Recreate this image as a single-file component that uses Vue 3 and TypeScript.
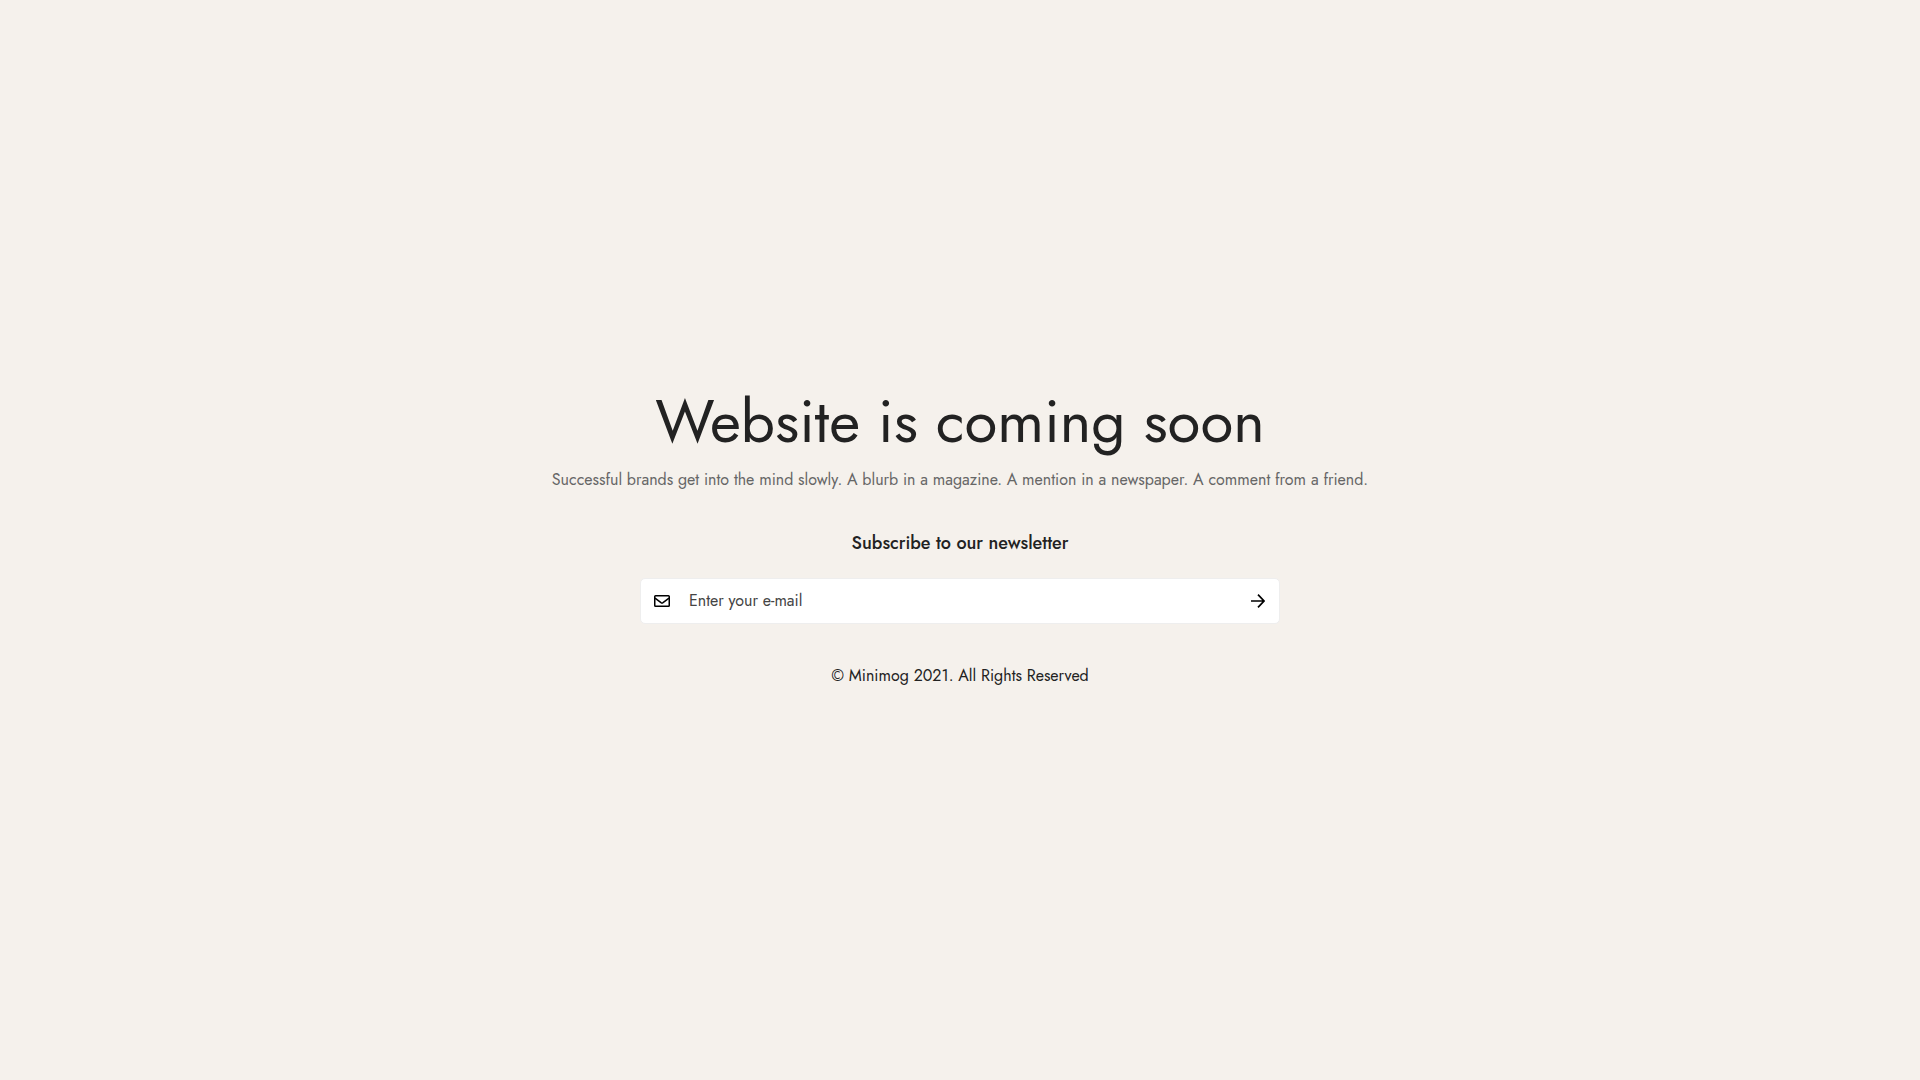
<script setup lang="ts">
import { ref } from 'vue'

const email = ref('')
</script>

<template>
  <main class="page">
    <h1 class="title">Website is coming soon</h1>
    <p class="intro">
      Successful brands get into the mind slowly. A blurb in a magazine. A mention in a newspaper. A comment from a friend.
    </p>
    <h2 class="subtitle"><label for="email">Subscribe to our newsletter</label></h2>
    <form class="form" @submit.prevent>
      <svg class="mail" viewBox="0 0 16 12" aria-hidden="true">
        <rect x="0.75" y="0.75" width="14.5" height="10.5" rx="0.8" />
        <path d="M1 3.2 L7 7.7 Q8 8.4 9 7.7 L15 3.2" />
      </svg>
      <input id="email" v-model="email" class="field" type="email" placeholder="Enter your e-mail" />
      <button class="send" type="submit" aria-label="Subscribe">
        <svg class="arrow" viewBox="0 0 14 14" aria-hidden="true">
          <path d="M0 7 H13 M7 0.7 L13 7 L7 13.3" />
        </svg>
      </button>
    </form>
    <p class="copyright">© Minimog 2021. All Rights Reserved</p>
  </main>
</template>

<style>
body {
  margin: 0;
  background: #f5f1ec;
}
</style>

<style scoped>
.page {
  box-sizing: border-box;
  min-height: 100vh;
  padding: 0 16px 6px;
  display: flex;
  flex-direction: column;
  align-items: center;
  justify-content: center;
  background: #f5f1ec;
  color: #222;
  font-family: Jost, Lato, sans-serif;
  font-size: 16px;
  line-height: 24px;
  text-align: center;
}

.title {
  margin: 0 0 10px;
  font-size: 60px;
  font-weight: 400;
  line-height: 72px;
}

.intro {
  margin: 0 0 36px;
  color: #666;
}

.subtitle {
  margin: 0 0 20px;
  font-size: 18px;
  font-weight: 500;
  line-height: 30px;
}

.form {
  box-sizing: border-box;
  width: 100%;
  max-width: 640px;
  height: 46px;
  margin: 0 0 40px;
  display: flex;
  align-items: center;
  border: 1px solid #eee;
  border-radius: 5px;
  background: #fff;
}

.mail {
  flex: none;
  width: 16px;
  height: 12px;
  margin-left: 13px;
  fill: none;
  stroke: #000;
  stroke-width: 1.5;
}

.field {
  box-sizing: border-box;
  flex: 1;
  min-width: 0;
  height: 44px;
  padding: 0 19px 2px;
  border: 0;
  outline: 0;
  background: transparent;
  color: #222;
  font: inherit;
}

.field::placeholder {
  color: #444;
  opacity: 1;
}

.send {
  flex: none;
  width: 42px;
  height: 44px;
  padding: 0;
  display: flex;
  align-items: center;
  justify-content: center;
  border: 0;
  background: transparent;
  cursor: pointer;
}

.arrow {
  width: 14px;
  height: 14px;
  fill: none;
  stroke: #000;
  stroke-width: 1.7;
}

.copyright {
  margin: 0;
}
</style>
